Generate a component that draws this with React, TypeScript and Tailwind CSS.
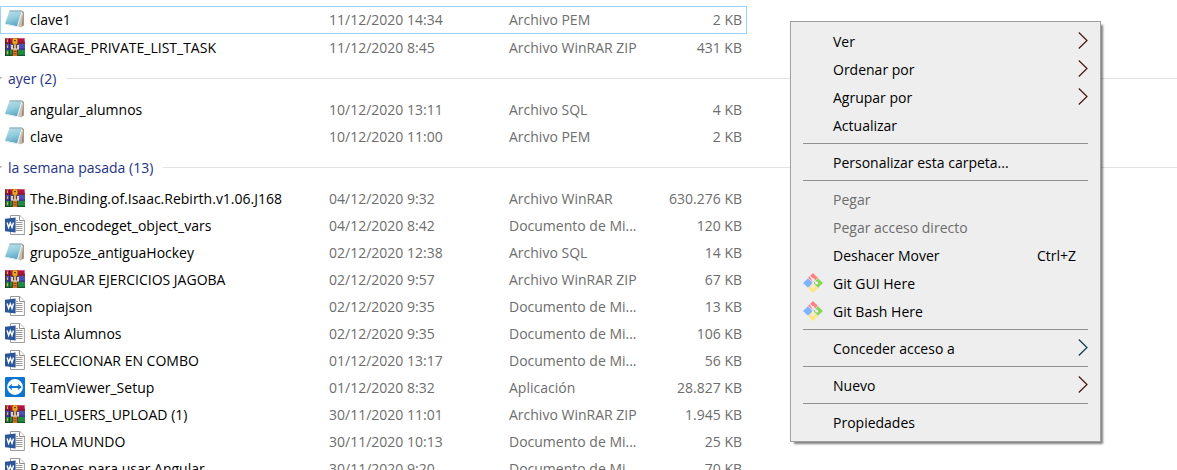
import React from "react";

type Kind = "note" | "rar" | "word" | "teamviewer";

interface FileRow {
  kind: Kind;
  name: string;
  date: string;
  type: string;
  size: string;
  selected?: boolean;
}

interface FileGroup {
  label?: string;
  files: FileRow[];
}

const groups: FileGroup[] = [
  {
    files: [
      { kind: "note", name: "clave1", date: "11/12/2020 14:34", type: "Archivo PEM", size: "2 KB", selected: true },
      { kind: "rar", name: "GARAGE_PRIVATE_LIST_TASK", date: "11/12/2020 8:45", type: "Archivo WinRAR ZIP", size: "431 KB" },
    ],
  },
  {
    label: "ayer (2)",
    files: [
      { kind: "note", name: "angular_alumnos", date: "10/12/2020 13:11", type: "Archivo SQL", size: "4 KB" },
      { kind: "note", name: "clave", date: "10/12/2020 11:00", type: "Archivo PEM", size: "2 KB" },
    ],
  },
  {
    label: "la semana pasada (13)",
    files: [
      { kind: "rar", name: "The.Binding.of.Isaac.Rebirth.v1.06.J168", date: "04/12/2020 9:32", type: "Archivo WinRAR", size: "630.276 KB" },
      { kind: "word", name: "json_encodeget_object_vars", date: "04/12/2020 8:42", type: "Documento de Mi...", size: "120 KB" },
      { kind: "note", name: "grupo5ze_antiguaHockey", date: "02/12/2020 12:38", type: "Archivo SQL", size: "14 KB" },
      { kind: "rar", name: "ANGULAR EJERCICIOS JAGOBA", date: "02/12/2020 9:57", type: "Archivo WinRAR ZIP", size: "67 KB" },
      { kind: "word", name: "copiajson", date: "02/12/2020 9:35", type: "Documento de Mi...", size: "13 KB" },
      { kind: "word", name: "Lista Alumnos", date: "02/12/2020 9:35", type: "Documento de Mi...", size: "106 KB" },
      { kind: "word", name: "SELECCIONAR EN COMBO", date: "01/12/2020 13:17", type: "Documento de Mi...", size: "56 KB" },
      { kind: "teamviewer", name: "TeamViewer_Setup", date: "01/12/2020 8:32", type: "Aplicación", size: "28.827 KB" },
      { kind: "rar", name: "PELI_USERS_UPLOAD (1)", date: "30/11/2020 11:01", type: "Archivo WinRAR ZIP", size: "1.945 KB" },
      { kind: "word", name: "HOLA MUNDO", date: "30/11/2020 10:13", type: "Documento de Mi...", size: "25 KB" },
      { kind: "word", name: "Razones para usar Angular", date: "30/11/2020 9:20", type: "Documento de Mi...", size: "70 KB" },
    ],
  },
];

function NoteIcon() {
  return (
    <svg viewBox="0 0 20 20" className="size-5" aria-hidden="true">
      <defs>
        <linearGradient id="notePage" x1="0.3" y1="0" x2="0.6" y2="1">
          <stop offset="0" stopColor="#b9dfe8" />
          <stop offset="0.5" stopColor="#93cddd" />
          <stop offset="1" stopColor="#5aa5bf" />
        </linearGradient>
      </defs>
      <path d="M16.6 1.6 18.9 3 18.9 16.6 15.6 18.4Z" fill="#a98d6c" />
      <path d="M16.6 2 17.8 4.6 16.6 17.8 12 17.8Z" fill="#f4f1ec" />
      <path d="M17.2 4 18 14.4 15.8 18.2 13 17.6Z" fill="#8d8a85" opacity="0.45" />
      <path d="M4.6 1.4 16.9 1.4 12 17.2 0 14.8Z" fill="url(#notePage)" />
      <path d="M4.6 1.4 16.9 1.4 16.5 2.6 4.2 2.6Z" fill="#8fa6ad" />
      <path d="M0 14.8 12 17.2 12.4 18.2 .3 15.8Z" fill="#d5e8ed" />
    </svg>
  );
}

function RarIcon() {
  return (
    <svg viewBox="0 0 20 20" className="size-5" aria-hidden="true">
      <path d="M.6 1H19.4L20 6.6H0Z" fill="#b01640" />
      <path d="M.5 1H19.5V2H.4Z" fill="#d8506e" />
      <path d="M0 5.6H20V6.8H0Z" fill="#6e0d28" />
      <path d="M0 7H20V12.6H0Z" fill="#4c50b4" />
      <path d="M0 11.6H20V12.8H0Z" fill="#2a2a70" />
      <path d="M0 13H20V19H0Z" fill="#218a43" />
      <path d="M0 17.8H20V19H0Z" fill="#0f5727" />
      <path d="M0 1H1V19H0ZM4 1H5V19H4Z" fill="#1c1420" opacity="0.55" />
      <path d="M2 2.4H3V5H2ZM2 8.2H3V11H2ZM2 14.2H3V17H2Z" fill="#f0b429" />
      <path d="M7 1H13V19H7Z" fill="#6b3a12" />
      <path d="M8 1H12V19H8Z" fill="#c97c2b" />
      <path d="M7.5 1.6H12.5V6.4H7.5Z" fill="#f2a928" />
      <path d="M9 3H11V4.2H9Z" fill="#7a4310" />
      <path d="M6 8H14V12.6H6Z" fill="#d8d2c8" />
      <path d="M8 7.4H12V11.4H8Z" fill="#6b4022" />
      <path d="M9.3 7.2H10.7V12.2H9.3Z" fill="#f7e5b5" />
      <path d="M8.5 14H11.5V15H8.5ZM8.5 16.2H11.5V17.2H8.5Z" fill="#8f4f15" />
    </svg>
  );
}

function WordIcon() {
  return (
    <svg viewBox="0 0 20 20" className="size-5" aria-hidden="true">
      <path d="M5.5.5H14.8L19.4 5V19.5H5.5Z" fill="#fff" stroke="#9a9a9a" />
      <path d="M14.5.5V5.5H19.5" fill="#fff" stroke="#8c8c8c" />
      <path d="M11 5.5H13M11 7.5H17.5M11 9.5H17.5M11 11.5H17.5M11 13.5H17.5M11 15.5H17.5" stroke="#9a9a9a" />
      <path d="M0 3.8 10.6 2.6V17.4L0 16.2Z" fill="#2b579a" />
      <path d="M2.1 7.5 3.6 12.3 5.3 8 7 12.3 8.5 7.5" fill="none" stroke="#fff" strokeWidth="1.4" />
    </svg>
  );
}

function TeamViewerIcon() {
  return (
    <svg viewBox="0 0 20 20" className="size-5" aria-hidden="true">
      <rect width="20" height="20" rx="1" fill="#0d74d1" />
      <circle cx="10" cy="10" r="7.9" fill="#fff" />
      <path d="M3.2 10 7.2 6.8 6.7 9.1H13.3L12.8 6.8 16.8 10 12.8 13.2 13.3 10.9H6.7L7.2 13.2Z" fill="#0d74d1" />
    </svg>
  );
}

function GitIcon() {
  return (
    <svg viewBox="0 0 20 20" className="size-5" aria-hidden="true">
      <path d="M10 0 14.8 4.8 10 9.4 5.2 4.8Z" fill="#ff7f83" />
      <path d="M5 5.2 9.8 10 5 14.8 0 10Z" fill="#80b3ff" />
      <path d="M15 5.2 20 10 15 14.8 10.2 10Z" fill="#8bd45c" />
      <path d="M10 10.6 14.8 15.2 10 20 5.2 15.2Z" fill="#ffe680" />
      <path d="M7 3.4 10 6.6V14.2M10 6.6 13.4 9.8" fill="none" stroke="#eee" strokeWidth="1.2" />
      <circle cx="10" cy="6.6" r="1.5" fill="#eee" />
      <circle cx="13.6" cy="10" r="1.5" fill="#eee" />
      <circle cx="10" cy="14" r="1.5" fill="#eee" />
    </svg>
  );
}

function FileIcon({ kind }: { kind: Kind }) {
  if (kind === "note") return <NoteIcon />;
  if (kind === "rar") return <RarIcon />;
  if (kind === "word") return <WordIcon />;
  return <TeamViewerIcon />;
}

function Chevron({ cool }: { cool?: boolean }) {
  return (
    <svg viewBox="0 0 10 18" className="h-[18px] w-[10px]" fill="none" aria-hidden="true">
      <path d="M.8 .5 9 8.5 .8 16.5" stroke={cool ? "#0c3a4a" : "#4a1410"} strokeWidth="1.2" />
    </svg>
  );
}

function Row({ file }: { file: FileRow }) {
  const edge = file.selected ? "border-y border-[#99d1ff]" : "";
  return (
    <tr className={file.selected ? "h-7" : "h-[27px]"}>
      <td className={`${edge} ${file.selected ? "border-l pl-1" : "pl-[5px]"}`}>
        <div className="flex items-center gap-[5px]">
          <span className="shrink-0 pb-0.5">
            <FileIcon kind={file.kind} />
          </span>
          <span className="text-black">{file.name}</span>
        </div>
      </td>
      <td className={edge}>{file.date}</td>
      <td className={edge}>{file.type}</td>
      <td className={`${edge} text-right ${file.selected ? "border-r pr-1" : "pr-[5px]"}`}>{file.size}</td>
      <td />
    </tr>
  );
}

interface MenuEntry {
  label: string;
  sub?: "warm" | "cool";
  disabled?: boolean;
  git?: boolean;
  shortcut?: string;
}

const menu: MenuEntry[][] = [
  [
    { label: "Ver", sub: "warm" },
    { label: "Ordenar por", sub: "warm" },
    { label: "Agrupar por", sub: "warm" },
    { label: "Actualizar" },
  ],
  [{ label: "Personalizar esta carpeta..." }],
  [
    { label: "Pegar", disabled: true },
    { label: "Pegar acceso directo", disabled: true },
    { label: "Deshacer Mover", shortcut: "Ctrl+Z" },
    { label: "Git GUI Here", git: true },
    { label: "Git Bash Here", git: true },
  ],
  [{ label: "Conceder acceso a", sub: "cool" }],
  [{ label: "Nuevo", sub: "warm" }],
  [{ label: "Propiedades" }],
];

function ContextMenu() {
  return (
    <div
      role="menu"
      className="absolute top-[21px] left-[790px] w-[311px] border border-[#a0a0a0] bg-[#eeeeee] py-[5px] text-black shadow-[3px_3px_2px_-1px_rgba(0,0,0,0.5)]"
    >
      {menu.map((section, i) => (
        <div key={i}>
          {i > 0 && <hr className="mx-3 my-1 border-t border-[#919191]" />}
          {section.map((item) => (
            <button
              key={item.label}
              type="button"
              role="menuitem"
              disabled={item.disabled}
              aria-haspopup={item.sub ? "menu" : undefined}
              className="flex h-7 w-full items-center px-3 text-left enabled:hover:bg-white disabled:text-[#6d6d6d]"
            >
              <span className="w-[30px] shrink-0">{item.git && <GitIcon />}</span>
              <span className="flex-1 pt-0.5">{item.label}</span>
              {item.shortcut && <span className="pt-0.5 pr-3">{item.shortcut}</span>}
              {item.sub && <Chevron cool={item.sub === "cool"} />}
            </button>
          ))}
        </div>
      ))}
    </div>
  );
}

export default function App() {
  return (
    <main className="relative h-screen overflow-hidden bg-white pt-1.5 font-['Open_Sans','Noto_Sans',sans-serif] text-[14px] leading-5 whitespace-nowrap text-[#6d6d6d]">
      <table className="w-full table-fixed border-separate border-spacing-0">
        <colgroup>
          <col className="w-[329px]" />
          <col className="w-[180px]" />
          <col className="w-[150px]" />
          <col className="w-[88px]" />
          <col />
        </colgroup>
        {groups.map((group, i) => (
          <tbody key={i}>
            {group.label && (
              <tr className="h-[35px]">
                <th colSpan={5} scope="rowgroup" className="font-normal">
                  <div className="flex items-center gap-2.5">
                    <button type="button" className="flex items-center text-[#1e3287]">
                      <svg viewBox="0 0 8 8" className="-ml-1.5 size-2" fill="none" aria-hidden="true">
                        <path d="M.5 2 4 5.5 7.5 2" stroke="#707070" />
                      </svg>
                      <span className="pl-1.5">{group.label}</span>
                    </button>
                    <span className="h-px flex-1 bg-[#e2e2e2]" />
                  </div>
                </th>
              </tr>
            )}
            {group.files.map((file) => (
              <Row key={file.name} file={file} />
            ))}
          </tbody>
        ))}
      </table>
      <ContextMenu />
    </main>
  );
}
